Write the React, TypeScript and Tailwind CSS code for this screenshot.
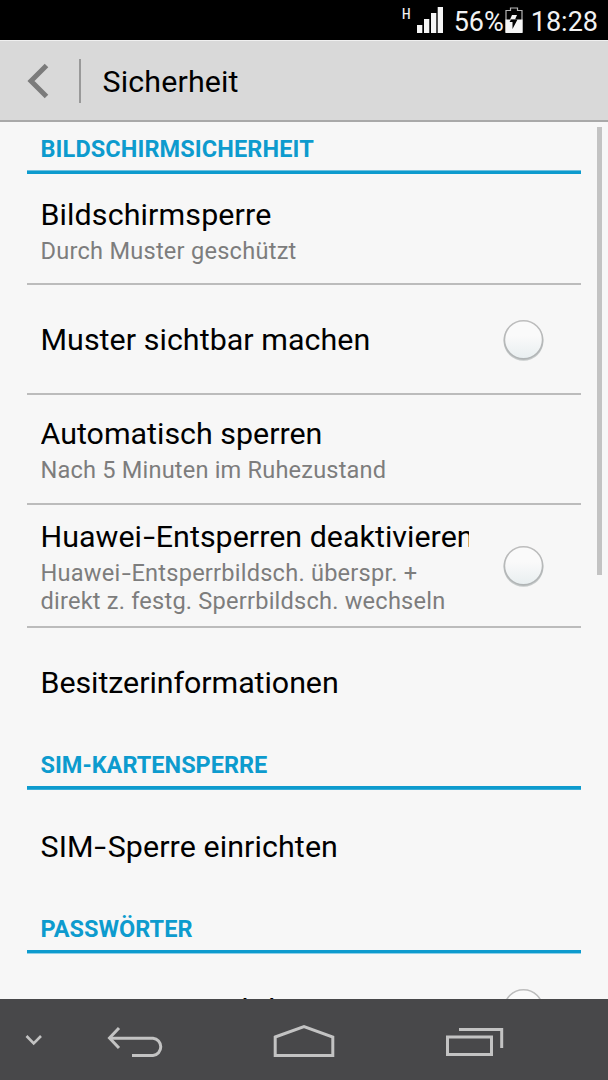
import clsx from "clsx";

function Toggle() {
  return (
    <svg width="46" height="46" viewBox="0 0 46 46" className="mt-px shrink-0">
      <defs>
        <linearGradient id="knob" x1="0" y1="0" x2="0" y2="1">
          <stop offset="0.4" stopColor="#fafafa" />
          <stop offset="1" stopColor="#e8eef0" />
        </linearGradient>
        <linearGradient id="ring" x1="0" y1="0" x2="0" y2="1">
          <stop offset="0" stopColor="#bdbdbd" />
          <stop offset="1" stopColor="#b0b4b5" />
        </linearGradient>
      </defs>
      <circle cx="22.5" cy="23.8" r="20" fill="#c6caca" />
      <circle cx="22.5" cy="22.8" r="19.1" fill="url(#knob)" stroke="url(#ring)" strokeWidth="1.6" />
    </svg>
  );
}

function WideHyphens({ text }: { text: string }) {
  return text.split("-").map((part, i) => (
    <span key={i}>
      {i > 0 && <span className="mx-[0.09em] inline-block scale-x-140">-</span>}
      {part}
    </span>
  ));
}

type HeadingProps = { className: string; label: string; labelClass?: string; lineClass: string };

function Heading({ className, label, labelClass, lineClass }: HeadingProps) {
  return (
    <div className={clsx("flex flex-col justify-end", className)}>
      <h2 className={clsx("pl-[13.5px] text-[23.5px] leading-7 font-bold text-[#0d9bce] whitespace-nowrap", labelClass)}>
        {label}
      </h2>
      <div className={clsx("mt-[7px] h-1 bg-[#0d9bce]", lineClass)} />
    </div>
  );
}

type RowProps = {
  className: string;
  title: string;
  titleClass?: string;
  lines?: { text: string; className: string }[];
  toggle?: boolean;
};

function Row({ className, title, titleClass, lines = [], toggle }: RowProps) {
  return (
    <div className={clsx("flex items-center justify-between pl-[13.5px] pr-[34.5px] border-[#bcbcbc]", className)}>
      <div className={clsx("w-[428px] overflow-hidden whitespace-nowrap", lines.length ? "pt-[3px]" : "pt-[2px]")}>
        <h3 className={clsx("text-[30.4px] leading-9 text-black", titleClass)}>
          <WideHyphens text={title} />
        </h3>
        {lines.length > 0 && (
          <div className="mt-1 text-[23.6px] leading-7 text-[#7d7d7d]">
            {lines.map((line) => (
              <p key={line.text} className={line.className}>
                <WideHyphens text={line.text} />
              </p>
            ))}
          </div>
        )}
      </div>
      {toggle && <Toggle />}
    </div>
  );
}

export default function App() {
  return (
    <div className="flex h-[1080px] w-[608px] flex-col overflow-hidden bg-[#f7f7f7] font-['Roboto',sans-serif]">
      <div className="flex h-10 shrink-0 items-center justify-end bg-black pt-[2px] pr-[10px] text-[27px] text-[#f2f2f2]">
        <span className="mb-[14px] mr-[5px] inline-block scale-x-80 text-[15px] leading-none font-medium">H</span>
        <svg width="27" height="26" viewBox="0 0 27 26" fill="#f5f5f5" className="mb-[2px] mr-[10px]">
          <path d="M0 18h5.3v8H0zM7 12h5.3v14H7zM14 6h5.3v20H14zM20.7 0h5.3v26h-5.3z" />
        </svg>
        <span className="mr-px pt-[2px]">56%</span>
        <svg width="18" height="26" viewBox="0 0 18 26" className="mb-[2px] mr-[8px]">
          <path d="M1 25V3.5h4.5V1h7v2.5H17V25z" fill="none" stroke="#b5b5b5" strokeWidth="1.2" />
          <path d="M.5 12.5h17V26H.5z" fill="#f5f5f5" />
          <path d="M7 8h5l-2 4.5H5z" fill="#f5f5f5" />
          <path d="M4.5 15L6 12.5h6.5L7.5 22v-7z" fill="#000" />
        </svg>
        <span className="pt-[2px]">18:28</span>
      </div>

      <div className="flex h-[82px] shrink-0 items-center border-t border-b-2 border-t-[#f0f0f0] border-b-[#a9a9a9] bg-[#d9d9d9] pl-[26px]">
        <svg width="24" height="36" viewBox="0 0 24 36" fill="none" stroke="#7b7b7b" strokeWidth="5">
          <path d="M20.5 2.5L5 18l15.5 15.5" />
        </svg>
        <div className="ml-[29px] h-11 w-[2px] bg-[#999]" />
        <h1 className="ml-[21.5px] pt-[2px] text-[30.4px] tracking-[0.15px] text-black">Sicherheit</h1>
      </div>

      <div className="relative min-h-0 flex-1 overflow-hidden px-[27px]">
        <Heading
          className="h-[52px]"
          label="BILDSCHIRMSICHERHEIT"
          labelClass="tracking-[0.1px]"
          lineClass="border-t border-[#6fc1df]"
        />
        <Row
          className="h-[111px] border-b-2 pt-[2px]"
          title="Bildschirmsperre"
          titleClass="tracking-[0.13px]"
          lines={[{ text: "Durch Muster geschützt", className: "tracking-[0.24px]" }]}
        />
        <Row
          className="h-[110px] border-b-2"
          title="Muster sichtbar machen"
          titleClass="tracking-[0.05px]"
          toggle
        />
        <Row
          className="h-[110px] border-b-2 pb-[2px]"
          title="Automatisch sperren"
          lines={[{ text: "Nach 5 Minuten im Ruhezustand", className: "tracking-[0.18px]" }]}
        />
        <Row
          className="h-[123px] border-b-2"
          title="Huawei-Entsperren deaktivieren"
          titleClass="tracking-[0.02px]"
          lines={[
            { text: "Huawei-Entsperrbildsch. überspr. +", className: "tracking-[0.22px]" },
            { text: "direkt z. festg. Sperrbildsch. wechseln", className: "tracking-[0.21px]" },
          ]}
          toggle
        />
        <Row className="h-[110px] pb-[2px]" title="Besitzerinformationen" titleClass="tracking-[-0.05px]" />
        <Heading className="h-[52px]" label="SIM-KARTENSPERRE" lineClass="border-b border-[#3aaed8]" />
        <Row className="h-[112px]" title="SIM-Sperre einrichten" titleClass="tracking-[0.1px]" />
        <Heading className="h-[52px]" label="PASSWÖRTER" lineClass="border-b border-[#8fd0e8]" />
        <Row className="h-[109px]" title="Passwörter sichtbar" toggle />
        <div className="absolute right-[6px] top-[5px] h-[448px] w-[5px] bg-[#c3c3c3]" />
      </div>

      <div className="flex h-[81px] shrink-0 items-center bg-[#48484a]">
        <svg width="608" height="81" viewBox="0 0 608 81" fill="none" stroke="#c3c3c3" strokeWidth="3">
          <path d="M26.5 37l7.2 7.5L41 37" strokeWidth="2.6" />
          <path d="M110 39.2h43a8.7 8.7 0 0 1 0 17.3h-21" />
          <path d="M119 29l-9.5 10 9.5 10" />
          <path d="M275.2 38L304 27.5 332.8 38v18.5h-57.6z" />
          <path d="M447.5 38h44v17.5h-44zM459 30.5h42.7V49" />
        </svg>
      </div>
    </div>
  );
}
